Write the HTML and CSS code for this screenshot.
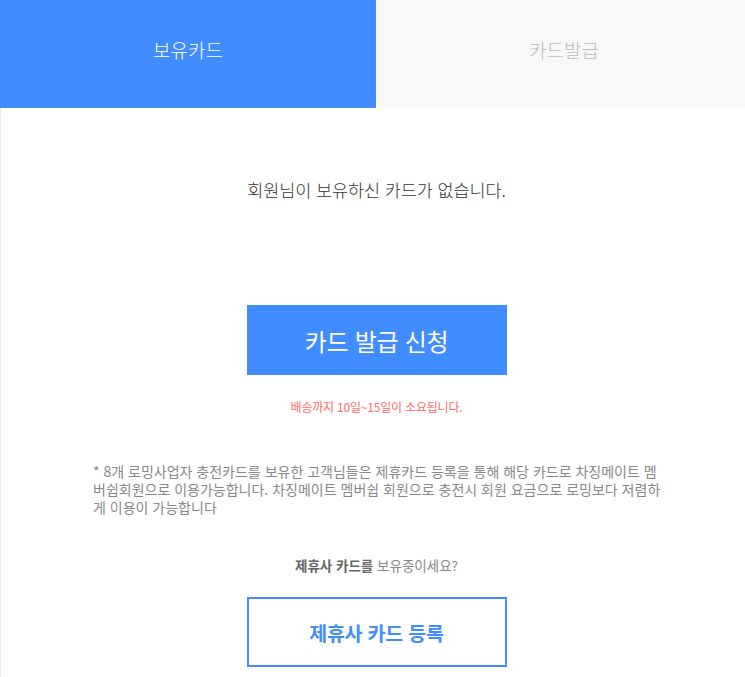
FILE: index.html
```html
<!DOCTYPE html>
<html lang="ko">
<head>
<meta charset="utf-8">
<title>보유카드</title>
<link rel="stylesheet" href="styles.css">
</head>
<body>
<div class="page">
  <nav class="tabs">
    <a class="tab tab-active">보유카드</a>
    <a class="tab">카드발급</a>
  </nav>
  <main class="content">
    <p class="empty-msg">회원님이 보유하신 카드가 없습니다.</p>
    <a class="btn-primary">카드 발급 신청</a>
    <p class="delivery">배송까지 10일~15일이 소요됩니다.</p>
    <p class="notice">* 8개 로밍사업자 충전카드를 보유한 고객님들은 제휴카드 등록을 통해 해당 카드로 차징메이트 멤버쉽회원으로 이용가능합니다. 차징메이트 멤버쉽 회원으로 충전시 회원 요금으로 로밍보다 저렴하게 이용이 가능합니다</p>
    <p class="question"><strong>제휴사 카드를</strong> 보유중이세요?</p>
    <a class="btn-outline">제휴사 카드 등록</a>
  </main>
</div>
</body>
</html>
```
FILE: styles.css
```css
html, body {
  margin: 0;
  padding: 0;
  background: #fff;
  overflow: hidden;
}
body {
  font-family: "Noto Sans CJK KR", "Noto Sans", sans-serif;
  color: #333;
}
.page {
  width: 752px;
  min-height: 677px;
}
.tabs {
  display: grid;
  grid-template-columns: 1fr 1fr;
  height: 108px;
}
.tab {
  display: flex;
  align-items: center;
  justify-content: center;
  font-size: 19px;
  font-weight: 300;
  color: #bbb;
  background: #f8f8f8;
  padding-bottom: 10px;
}
.tab-active {
  background: #418cff;
  color: #fff;
}
.content {
  display: flex;
  flex-direction: column;
  align-items: center;
  border-left: 1px solid #eee;
  min-height: 569px;
  box-sizing: border-box;
}
.content p { margin: 0; }
.empty-msg {
  margin-top: 70px !important;
  font-size: 17.5px;
  line-height: 24px;
  font-weight: 300;
  letter-spacing: -0.1px;
  color: #333;
}
.btn-primary {
  margin-top: 103px;
  width: 260px;
  height: 70px;
  display: flex;
  align-items: center;
  justify-content: center;
  background: #418cff;
  color: #fff;
  font-size: 24px;
  font-weight: 400;
  letter-spacing: -0.3px;
}
.delivery {
  margin-top: 24px !important;
  font-size: 12px;
  line-height: 16px;
  color: #ff6b6b;
  letter-spacing: -0.2px;
}
.notice {
  margin-top: 47px !important;
  align-self: flex-start;
  margin-left: 92px !important;
  width: 570px;
  font-size: 14px;
  line-height: 18px;
  color: #888;
  letter-spacing: 0;
  word-break: break-all;
}
.question {
  margin-top: 40px !important;
  font-size: 13.5px;
  line-height: 18px;
  color: #888;
  letter-spacing: 0;
}
.question strong {
  color: #666;
  font-weight: 700;
}
.btn-outline {
  margin-top: 23px;
  width: 260px;
  height: 70px;
  box-sizing: border-box;
  display: flex;
  align-items: center;
  justify-content: center;
  border: 2px solid #418cff;
  color: #418cff;
  font-size: 19.5px;
  font-weight: 700;
  letter-spacing: -0.2px;
}
```
